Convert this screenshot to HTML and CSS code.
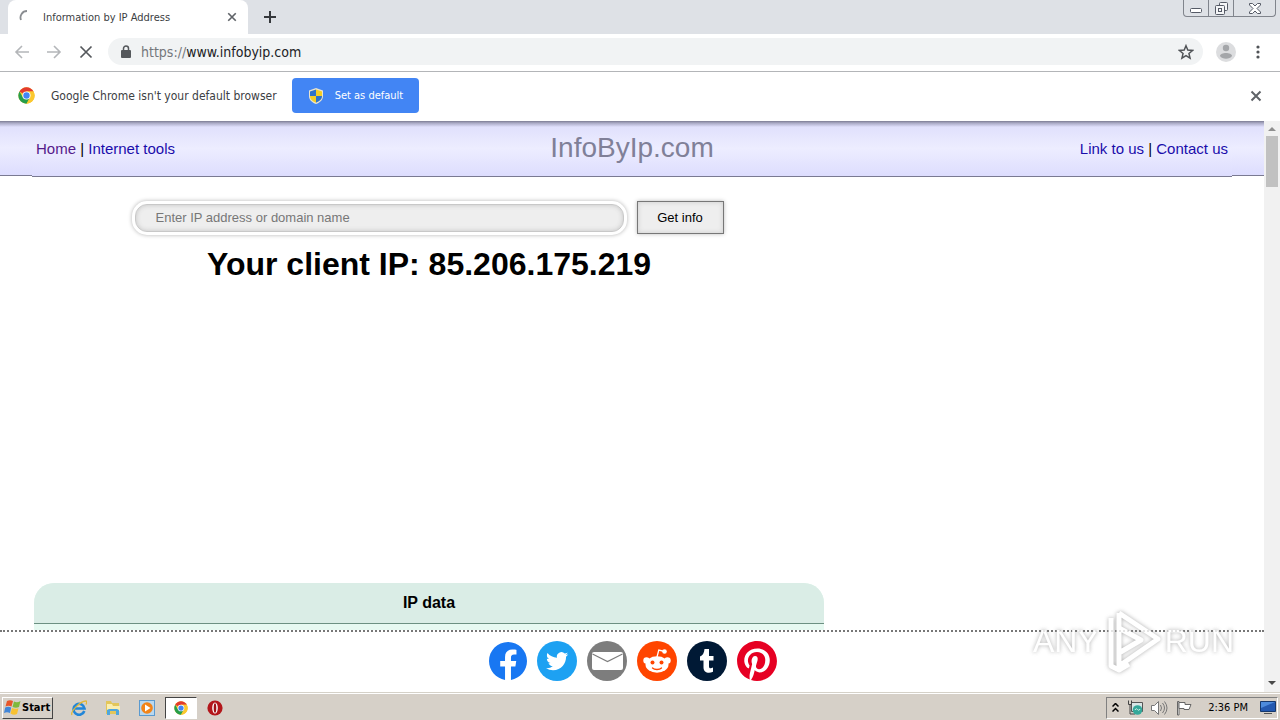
FILE: index.html
```html
<!DOCTYPE html>
<html lang="en">
<head>
<meta charset="utf-8">
<title>Information by IP Address</title>
<link rel="stylesheet" href="styles.css">
</head>
<body>
<svg class="defs" aria-hidden="true">
  <symbol id="chrome" viewBox="0 0 48 48">
    <circle cx="24" cy="24" r="23" fill="#fbc82f"/>
    <path d="M24 24 4.1 12.5A23 23 0 0 1 43.9 12.5H24z" fill="#e33b2e"/>
    <path d="M4.1 12.5A23 23 0 0 0 24 47L34 29.800 24 24 14 29.800z" fill="#269e4b"/>
    <path d="M43.900 12.500H24L34 29.800 24 47A23 23 0 0 0 43.900 12.500z" fill="#fbc82f"/>
    <circle cx="24" cy="24" r="11.500" fill="#fff"/>
    <circle cx="24" cy="24" r="9" fill="#4285f4"/>
  </symbol>
  <symbol id="cross" viewBox="0 0 12 12">
    <path d="M1.500 1.500l9 9M10.500 1.500l-9 9" fill="none" stroke="currentColor" stroke-width="2"/>
  </symbol>
</svg>

<header class="tabstrip">
  <div class="tab">
    <svg class="spinner" viewBox="0 0 16 16"><path d="M2 11A6.500 6.500 0 0 1 8 2" fill="none" stroke="#8a8d91" stroke-width="1.800"/></svg>
    <span class="tab-title">Information by IP Address</span>
    <button class="plain" aria-label="Close tab"><svg class="icon-s" ><use href="#cross"/></svg></button>
  </div>
  <button class="plain new-tab" aria-label="New tab"><svg width="12" height="12" viewBox="0 0 12 12"><path d="M6 0v12M0 6h12" stroke="#35383c" stroke-width="2"/></svg></button>
  <div class="window-controls">
    <button class="win" aria-label="Minimize"><svg width="12" height="5" viewBox="0 0 12 5"><rect x=".5" y=".5" width="11" height="4" rx="1" fill="#fff" stroke="#555a66"/></svg></button>
    <button class="win" aria-label="Restore"><svg width="13" height="13" viewBox="0 0 13 13"><g fill="#f4f5f7" stroke="#555a66"><rect x="4.500" y=".5" width="8" height="8" rx="1"/><rect x=".5" y="3.500" width="9" height="9" rx="1"/><rect x="3.500" y="6.500" width="3" height="3"/></g></svg></button>
    <button class="win win-close" aria-label="Close"><svg width="12" height="11" viewBox="0 0 12 11"><path d="M.5.5h3L6 3 8.500.5h3v1.500L8 5.500l3.500 3.500v1.500h-3L6 8l-2.500 2.500h-3V9L4 5.500.5 2z" fill="#fff" stroke="#555a66"/></svg></button>
  </div>
</header>

<div class="toolbar">
  <button class="plain nav" aria-label="Back"><svg width="16" height="16" viewBox="0 0 16 16"><path d="M15 8H2M8 2 2 8l6 6" fill="none" stroke="#b4b6b9" stroke-width="1.600"/></svg></button>
  <button class="plain nav" aria-label="Forward"><svg width="16" height="16" viewBox="0 0 16 16"><path d="M1 8h13M8 2l6 6-6 6" fill="none" stroke="#b4b6b9" stroke-width="1.600"/></svg></button>
  <button class="plain nav" aria-label="Stop"><svg width="16" height="16" viewBox="0 0 16 16"><path d="m2.500 2.500 11 11m0-11-11 11" stroke="#55585c" stroke-width="1.700"/></svg></button>
  <div class="omnibox">
    <svg class="lock" width="10" height="13" viewBox="0 0 10 13"><path d="M2.500 6V3.500a2.500 2.500 0 0 1 5 0V6" fill="none" stroke="#55585c" stroke-width="1.500"/><rect x="0" y="5" width="10" height="8" rx="1" fill="#55585c"/></svg>
    <label for="url">https://</label><input id="url" type="text" value="www.infobyip.com">
    <button class="plain" aria-label="Bookmark"><svg width="16" height="16" viewBox="0 0 24 24"><path d="m12 2.500 2.700 6.600 7.100.6-5.400 4.600 1.700 7-6.100-3.800-6.100 3.800 1.700-7-5.400-4.600 7.100-.6z" fill="none" stroke="#505357" stroke-width="2.200"/></svg></button>
  </div>
  <button class="plain profile" aria-label="Profile"><svg width="20" height="20" viewBox="0 0 20 20"><circle cx="10" cy="10" r="10" fill="#dcdddf"/><circle cx="10" cy="6" r="3.200" fill="#a4a6a9"/><path d="M4 14c0-4 12-4 12 0-2 3.500-10 3.500-12 0z" fill="#a4a6a9"/></svg></button>
  <button class="plain menu" aria-label="Menu"><svg width="4" height="14" viewBox="0 0 4 14"><g fill="#505357"><circle cx="2" cy="2" r="1.600"/><circle cx="2" cy="7" r="1.600"/><circle cx="2" cy="12" r="1.600"/></g></svg></button>
</div>

<div class="infobar">
  <svg class="infobar-logo"><use href="#chrome"/></svg>
  <span class="infobar-text">Google Chrome isn't your default browser</span>
  <button class="set-default">
    <svg width="14" height="16" viewBox="0 0 14 16"><path d="M7 0 14 2.500V8c0 4-3 6.500-7 8-4-1.500-7-4-7-8V2.500z" fill="#e9e4cf"/><path d="M7 1.500V8H1V3.500z" fill="#2f73c8"/><path d="M7 1.500 13 3.500V8H7z" fill="#f4ce24"/><path d="M1 8h6v6.700C3.500 13 1 11.500 1 8z" fill="#f4ce24"/><path d="M13 8H7v6.700C10.500 13 13 11.500 13 8z" fill="#2f73c8"/></svg>
    Set as default
  </button>
  <button class="plain infobar-close" aria-label="Dismiss"><svg class="icon-m"><use href="#cross"/></svg></button>
</div>

<div class="viewport">
  <div class="page">
    <div class="site-header">
      <div class="site-header-inner">
        <nav><a class="visited" href="#">Home</a> | <a href="#">Internet tools</a></nav>
        <div class="brand">InfoByIp.com</div>
        <nav class="right"><a href="#">Link to us</a> | <a href="#">Contact us</a></nav>
      </div>
    </div>
    <main class="content">
      <form class="search">
        <input type="text" aria-label="IP address or domain name" placeholder="Enter IP address or domain name">
        <button type="button">Get info</button>
      </form>
      <h1>Your client IP: 85.206.175.219</h1>
      <section class="ip-card"><h2>IP data</h2></section>
    </main>
    <footer class="share">
      <a href="#" aria-label="Facebook"><svg width="38" height="38" viewBox="0 0 24 24"><path d="M6 4h12v19.800H10z" fill="#fff"/><path fill="#1877f2" d="M24 12.073c0-6.627-5.373-12-12-12s-12 5.373-12 12c0 5.990 4.388 10.954 10.125 11.854v-8.385H7.078v-3.470h3.047V9.430c0-3.007 1.792-4.669 4.533-4.669 1.312 0 2.686.235 2.686.235v2.953H15.830c-1.491 0-1.956.925-1.956 1.874v2.250h3.328l-.532 3.470h-2.796v8.385C19.612 23.027 24 18.062 24 12.073z"/></svg></a>
      <a href="#" aria-label="Twitter"><svg width="40" height="40" viewBox="0 0 40 40"><circle cx="20" cy="20" r="20" fill="#1da1f2"/><path transform="translate(9 9) scale(.93)" fill="#fff" d="M23.953 4.570a10 10 0 01-2.825.775 4.958 4.958 0 002.163-2.723c-.951.555-2.005.959-3.127 1.184a4.920 4.920 0 00-8.384 4.482C7.690 8.095 4.067 6.130 1.640 3.162a4.822 4.822 0 00-.666 2.475c0 1.710.870 3.213 2.188 4.096a4.904 4.904 0 01-2.228-.616v.060a4.923 4.923 0 003.946 4.827 4.996 4.996 0 01-2.212.085 4.936 4.936 0 004.604 3.417 9.867 9.867 0 01-6.102 2.105c-.390 0-.779-.023-1.170-.067a13.995 13.995 0 007.557 2.209c9.053 0 13.998-7.496 13.998-13.985 0-.210 0-.420-.015-.630A9.935 9.935 0 0024 4.590z"/></svg></a>
      <a href="#" aria-label="Email"><svg width="40" height="40" viewBox="0 0 40 40"><circle cx="20" cy="20" r="20" fill="#7d7d7d"/><rect x="5" y="11" width="31" height="18" rx="2" fill="#fff"/><path d="m5.500 13 15 7.500 15-7.500" fill="none" stroke="#7d7d7d" stroke-width="1.200"/></svg></a>
      <a href="#" aria-label="Reddit"><svg width="40" height="40" viewBox="0 0 40 40"><circle cx="20" cy="20" r="20" fill="#ff4500"/><g fill="#fff"><ellipse cx="20" cy="23.500" rx="11.500" ry="8.300"/><circle cx="9.500" cy="19.500" r="3.200"/><circle cx="30.500" cy="19.500" r="3.200"/><circle cx="27.500" cy="10.500" r="2.300"/></g><path d="m20 16 1.800-7 6 1.500" fill="none" stroke="#fff" stroke-width="1.300"/><circle cx="15.500" cy="21.500" r="2" fill="#ff4500"/><circle cx="24.500" cy="21.500" r="2" fill="#ff4500"/><path d="M15.500 27c2 2 7 2 9 0" fill="none" stroke="#ff4500" stroke-width="1.300" stroke-linecap="round"/></svg></a>
      <a href="#" aria-label="Tumblr"><svg width="40" height="40" viewBox="0 0 40 40"><circle cx="20" cy="20" r="20" fill="#001935"/><path d="M17.500 8H22v7h4.500v4.500H22v5.700c0 2.300 1.500 2.600 4 1.300v4.300c-4.500 2.200-9.500.8-9.500-4.300v-7H13v-4c2.700-.9 4.100-3.300 4.500-7.500z" fill="#fff"/></svg></a>
      <a href="#" aria-label="Pinterest"><svg width="40" height="40" viewBox="0 0 24 24"><circle cx="12" cy="12" r="11.600" fill="#fff"/><path fill="#e60023" d="M12.017 0C5.396 0 .029 5.367.029 11.987c0 5.079 3.158 9.417 7.618 11.162-.105-.949-.199-2.403.041-3.439.219-.937 1.406-5.957 1.406-5.957s-.359-.720-.359-1.781c0-1.663.967-2.911 2.168-2.911 1.024 0 1.518.769 1.518 1.688 0 1.029-.653 2.567-.992 3.992-.285 1.193.6 2.165 1.775 2.165 2.128 0 3.768-2.245 3.768-5.487 0-2.861-2.063-4.869-5.008-4.869-3.410 0-5.409 2.562-5.409 5.199 0 1.033.394 2.143.889 2.741.099.120.112.225.085.345-.090.375-.293 1.199-.334 1.363-.053.225-.172.271-.401.165-1.495-.690-2.433-2.878-2.433-4.646 0-3.776 2.748-7.252 7.920-7.252 4.158 0 7.392 2.967 7.392 6.923 0 4.135-2.607 7.462-6.233 7.462-1.214 0-2.354-.629-2.758-1.379l-.749 2.848c-.269 1.045-1.004 2.352-1.498 3.146 1.123.345 2.306.535 3.550.535 6.607 0 11.985-5.365 11.985-11.987C23.970 5.390 18.592.026 11.985.026z"/></svg></a>
    </footer>
  </div>
  <div class="scrollbar">
    <svg width="8" height="4" viewBox="0 0 8 4"><path d="M0 4h8L4 0z" fill="#8f8f8f"/></svg>
    <div class="thumb"></div>
    <svg class="down" width="8" height="4" viewBox="0 0 8 4"><path d="M0 0h8L4 4z" fill="#484848"/></svg>
  </div>
  <div class="watermark">
    <span>ANY</span>
    <svg width="60" height="66" viewBox="0 0 60 66"><path d="M17 5 56 31 17 58V20M17 5v15l22 12-22 13M9 10v48l8 4 10-6" fill="none" stroke="#fff" stroke-width="5" stroke-linejoin="round"/></svg>
    <span>RUN</span>
  </div>
</div>

<footer class="taskbar">
  <button class="start"><svg width="17" height="17" viewBox="0 0 17 17"><path d="M3 2c2-1 4-1 6 0L7.500 7.500c-2-1-4-1-6 0z" fill="#e8562a"/><path d="M10 2.500c2 1 4 1 6.500-.5L15 8c-2 1-4 1-6.500 0z" fill="#7fb93c"/><path d="M1.200 8.500c2-1 4-1 6 0L6 14c-2-1-4-1-6 0z" fill="#4286d8"/><path d="M8 9c2 1 4 1 6.500.200L13 15c-2 1-4 1-6.500-.500z" fill="#f8c232"/></svg>Start</button>
  <button class="task" aria-label="Internet Explorer"><svg width="16" height="16" viewBox="0 0 16 16"><path d="M13.300 11A5.500 5.500 0 1 1 13.500 8.500H4" fill="none" stroke="#2286d8" stroke-width="2.600"/><path d="M1 15C-1 12 9 1 15 1c1 0 1 1.500 0 3.500" fill="none" stroke="#e2b635" stroke-width="1.300"/></svg></button>
  <button class="task" aria-label="Explorer"><svg width="16" height="16" viewBox="0 0 16 16"><path d="M1 1h5l1 2h7v11H1z" fill="#e3c65a"/><path d="M2 4h5l1 2h7v5H2z" fill="#fbeeb0"/><path d="M2 15v-5l2-1h8l2 1v5h-3v-4H5v4z" fill="#4fa6dd"/></svg></button>
  <button class="task" aria-label="Media Player"><svg width="16" height="16" viewBox="0 0 16 16"><rect x=".5" y=".5" width="15" height="15" fill="#b9d8ef" stroke="#5a9ad0"/><circle cx="8" cy="8" r="5.800" fill="#f28419"/><path d="m6 4.500 5.500 3.500L6 11.500z" fill="#fff"/></svg></button>
  <button class="task active" aria-label="Chrome"><svg width="14" height="14"><use href="#chrome"/></svg></button>
  <button class="task" aria-label="Opera"><svg width="16" height="16" viewBox="0 0 16 16"><circle cx="8" cy="8" r="7.600" fill="#b3161b"/><ellipse cx="8" cy="8" rx="2.800" ry="5.500" fill="#fff"/><ellipse cx="8" cy="8" rx="1.300" ry="4.800" fill="#a01015"/></svg></button>
  <div class="tray">
    <svg width="7" height="9" viewBox="0 0 7 9"><path d="m.5 3.500 3-3 3 3m-6 5 3-3 3 3" fill="none" stroke="#000" stroke-width="1.500"/></svg>
    <svg width="16" height="16" viewBox="0 0 16 16"><path d="M4.500 2.500h11v9h-11z" fill="#d9e6e6" stroke="#555"/><path d="M1.500.5v4h3v-4M3 5v9h5" fill="none" stroke="#444"/><circle cx="10.500" cy="10" r="4.800" fill="#35a89a"/><path d="M8 10c2-4 3 3 5-1" fill="none" stroke="#d4f0e8"/></svg>
    <svg width="17" height="16" viewBox="0 0 17 16"><path d="M.5 5.500h3l4-4v13l-4-4h-3z" fill="#fff" stroke="#777"/><path d="M9.500 5q2 3 0 6M11.500 3q4 5 0 10M13.500 1.500q5 6.500 0 13" fill="none" stroke="#777"/></svg>
    <svg width="16" height="16" viewBox="0 0 16 16"><path d="M1.500 15V1.500H3V15z" fill="#fff" stroke="#666"/><path d="M3 2.500h6v2h6l-2 5H8v-1H3z" fill="#fff" stroke="#666"/></svg>
    <time>2:36 PM</time>
    <svg width="16" height="13" viewBox="0 0 16 13"><path d="M.5.5h15v10H.5z" fill="#2459b0" stroke="#16386c"/><path d="M1 1h14L1 7z" fill="#4d8bdc"/><path d="M4 12.500h8" stroke="#555"/></svg>
  </div>
</footer>
</body>
</html>
```

FILE: styles.css
```css
* { box-sizing: border-box; }

body {
  margin: 0;
  height: 100vh;
  display: flex;
  flex-direction: column;
  overflow: hidden;
  background: #fff;
  font-family: "Liberation Sans", Arial, sans-serif;
  font-size: 16px;
}

.defs { display: none; }
svg { display: block; flex: none; }
button, input { font: inherit; color: inherit; }

.plain {
  display: flex;
  align-items: center;
  justify-content: center;
  padding: 0;
  border: 0;
  background: none;
  color: #5f6368;
}

.icon-s { width: 10px; height: 10px; }
.icon-m { width: 12px; height: 12px; }

.tabstrip, .toolbar, .infobar, .taskbar {
  flex: none;
  display: flex;
  font-family: "DejaVu Sans Condensed", "DejaVu Sans", sans-serif;
  font-size: 12px;
}

/* Tab strip */
.tabstrip {
  height: 34px;
  padding: 0 4px 0 8px;
  background: #dee1e6;
}

.tab {
  width: 240px;
  display: flex;
  align-items: center;
  padding: 0 11px 0 11px;
  border-radius: 8px 8px 0 0;
  background: #fff;
  color: #3c4043;
  font-size: 11px;
}

.spinner { width: 16px; height: 16px; margin-right: 8px; }
.tab-title { flex: 1; white-space: nowrap; }
.new-tab { width: 44px; }

.window-controls {
  display: flex;
  height: 17px;
  margin-left: auto;
  border: 1px solid #80848c;
  border-top: 0;
  border-radius: 0 0 4px 4px;
}

.win {
  width: 25px;
  display: flex;
  align-items: center;
  justify-content: center;
  padding: 0;
  border: 0;
  border-right: 1px solid #80848c;
  background: none;
}

.win:first-child { padding-top: 4px; }
.win-close { width: 41px; border-right: 0; }

/* Toolbar */
.toolbar {
  height: 38px;
  align-items: center;
  padding: 0 12px 2px 6px;
  border-bottom: 1px solid #b3b5b8;
}

.nav { width: 32px; height: 28px; }

.omnibox {
  flex: 1;
  height: 27px;
  display: flex;
  align-items: center;
  margin-left: 6px;
  padding: 0 9px 0 13px;
  border-radius: 14px;
  background: #f1f3f4;
  font-size: 14px;
}

.lock { margin-right: 10px; }
.omnibox label { color: #74777b; }

.omnibox input {
  flex: 1;
  min-width: 0;
  padding: 0;
  border: 0;
  outline: 0;
  background: none;
  color: #202124;
}

.profile { margin-left: 13px; }
.menu { width: 20px; margin-left: 12px; }

/* Default browser prompt */
.infobar {
  height: 49px;
  align-items: center;
  padding: 0 18px 2px;
  color: #3c4043;
}

.infobar-logo { width: 17px; height: 17px; margin-right: 16px; }

.set-default {
  height: 35px;
  display: flex;
  align-items: center;
  gap: 12px;
  margin-left: 15px;
  padding: 0 16px 0 17px;
  border: 0;
  border-radius: 4px;
  background: #4285f4;
  color: #fff;
  font-size: 11px;
}

.infobar-close { margin-left: auto; }

/* Page */
.viewport {
  position: relative;
  flex: 1;
  min-height: 0;
  display: flex;
}

.page {
  flex: 1;
  min-width: 0;
  display: flex;
  flex-direction: column;
}

.site-header, .site-header-inner {
  border-bottom: 1px solid #7a7a92;
  background:
    linear-gradient(#7c7c92, #a9a9c4 2px, rgba(221, 221, 252, 0) 6px),
    linear-gradient(#ddddfc, #ededff 50%, #ddddfe);
}

.site-header { padding: 0 32px; }

.site-header-inner {
  height: 56px;
  display: grid;
  grid-template-columns: 1fr auto 1fr;
  align-items: center;
  margin-bottom: -2px;
  padding: 0 4px;
  font-size: 15px;
}

.site-header a { color: #1a0dab; text-decoration: none; }
.site-header a.visited { color: #551a8b; }
.right { text-align: right; }
.brand { color: #808098; font-size: 28px; line-height: 30px; padding-bottom: 2px; }

.content {
  flex: 1;
  min-height: 0;
  width: 790px;
  max-width: 100%;
  display: flex;
  flex-direction: column;
  margin-left: 34px;
}

.search {
  display: flex;
  justify-content: center;
  align-items: center;
  gap: 13px;
  padding-top: 25px;
  font-size: 13px;
}

.search input {
  width: 489px;
  height: 28px;
  padding: 0 20px;
  border: 1px solid #c8c8c8;
  border-radius: 12px;
  outline: 0;
  background: #eee;
  box-shadow: inset 0 0 5px #c4c4c4, 0 0 0 3px #fff, 0 0 4px 3px #b4b4b4;
}

.search input::placeholder { color: #777; }

.search button {
  width: 87px;
  height: 33px;
  padding: 0;
  border: 1px solid #777;
  background: #eee;
  box-shadow: inset 0 0 5px #ccc, 0 0 4px #bbb;
  color: #000;
}

h1 {
  margin: 11px 0 0;
  font-size: 32px;
  line-height: 38px;
  text-align: center;
}

.ip-card {
  height: 47px;
  margin-top: auto;
  border-radius: 20px 20px 0 0;
  background: #e6f9f1;
}

.ip-card h2 {
  height: 41px;
  margin: 0;
  border-bottom: 1px solid #6c9082;
  border-radius: 20px 20px 0 0;
  background: #daede6;
  font-size: 16px;
  line-height: 39px;
  text-align: center;
}

.share {
  height: 62px;
  display: flex;
  align-items: center;
  justify-content: center;
  gap: 10px;
  padding-bottom: 2px;
  padding-left: 2px;
  border-top: 2px dotted #777;
}

/* Scroll bar */
.scrollbar {
  width: 16px;
  display: flex;
  flex-direction: column;
  align-items: center;
  padding: 6px 0 7px;
  background: #f1f1f1;
}

.thumb { width: 12px; height: 51px; margin-top: 5px; background: #c1c1c1; }
.down { margin-top: auto; }

.watermark {
  position: absolute;
  right: 46px;
  bottom: 18px;
  display: flex;
  align-items: center;
  gap: 3px;
  color: #fff;
  font-family: "Liberation Sans", Arial, sans-serif;
  font-size: 32px;
  opacity: .8;
  filter: drop-shadow(0 0 2px #999);
  pointer-events: none;
}

/* Taskbar */
.taskbar {
  height: 28px;
  align-items: center;
  padding: 2px 2px 0;
  border-top: 1px solid #d5d1c8;
  background: #d6d0c8;
  box-shadow: inset 0 1px #fff;
  color: #000;
}

.start {
  height: 22px;
  display: flex;
  align-items: center;
  gap: 1px;
  margin-right: 10px;
  padding: 0 2px 0 1px;
  border: 1px solid;
  border-color: #fff #444 #444 #fff;
  background: #d6d0c8;
  font-size: 11px;
  font-weight: bold;
}

.task {
  width: 32px;
  height: 22px;
  display: flex;
  align-items: center;
  justify-content: center;
  margin-right: 2px;
  padding: 0;
  border: 1px solid transparent;
  background: none;
}

.task.active {
  border-color: #444 #fff #fff #444;
  background: #fff;
}

.tray {
  height: 22px;
  display: flex;
  align-items: center;
  gap: 8px;
  margin-left: auto;
  padding: 0 1px 0 5px;
  border: 1px solid;
  border-color: #808080 #fff #fff #808080;
  font-size: 11px;
}

.tray time { margin: 0 4px 0 8px; }
```
